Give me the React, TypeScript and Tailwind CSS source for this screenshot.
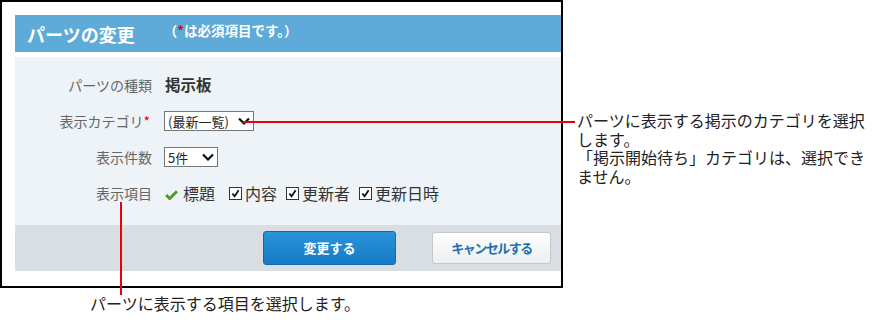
import React from 'react'

const FONT = "font-['Noto_Sans_CJK_JP','Noto_Sans',sans-serif]"
// 注釈用（行ボックスを詰めるため欧文フォントを先頭に）
const NOTE_FONT = "font-['Liberation_Sans','Noto_Sans_CJK_JP',sans-serif]"

// セレクトボックス風の表示
function FakeSelect({ value, width }: { value: string; width: string }) {
  return (
    <div
      className={`${width} h-[20px] flex items-center justify-between border border-[#767676] bg-white pl-[3px] pr-[3px] text-[13px] text-[#222] leading-none`}
    >
      <span>{value}</span>
      <svg className="w-[12px] h-[8px]" viewBox="0 0 12 8" fill="none">
        <path d="M1 1.5l5 5 5-5" stroke="#111" strokeWidth="2.2" />
      </svg>
    </div>
  )
}

function CheckBox() {
  return (
    <span className="inline-flex w-[13px] h-[13px] items-center justify-center border border-[#333] bg-white">
      <svg className="w-[9px] h-[9px]" viewBox="0 0 10 10" fill="none">
        <path d="M1.5 5l2.5 3L8.5 1.5" stroke="#111" strokeWidth="2" />
      </svg>
    </span>
  )
}

const ITEMS = ['内容', '更新者', '更新日時']

const NOTE_LINES = [
  'パーツに表示する掲示のカテゴリを選択',
  'します。',
  '「掲示開始待ち」カテゴリは、選択でき',
  'ません。',
]

export default function App() {
  return (
    <div className={`relative w-[874px] h-[326px] bg-white ${FONT}`}>
      {/* 画面のスクリーンショット枠 */}
      <div className="w-[563px] h-[288px] border-2 border-black pl-[13px] pt-[13px]">
        {/* ヘッダー */}
        <div className="h-[37px] bg-[#5eaad9] flex items-center pl-[12px]">
          <span className="text-[18px] font-bold text-white leading-none">パーツの変更</span>
          <span className="ml-[29px] -mt-[6px] text-[13.5px] font-bold text-white leading-none">
            （<span className="text-[#e60012]">*</span>は必須項目です。）
          </span>
        </div>

        {/* 本体 */}
        <div className="mt-[5px] bg-[#eef3f7] pt-[10px] pb-[14px]">
          <div className="h-[36px] flex items-center">
            <div className="w-[137px] text-right text-[14px] text-[#666]">パーツの種類</div>
            <div className="ml-[13px] text-[15.5px] font-bold text-[#333]">掲示板</div>
          </div>
          <div className="h-[36px] flex items-center">
            <div className="w-[137px] pr-[2px] text-right text-[14px] text-[#666]">
              表示カテゴリ<span className="text-[#e60012]">*</span>
            </div>
            <div className="ml-[12px]">
              <FakeSelect value="(最新一覧)" width="w-[90px]" />
            </div>
          </div>
          <div className="h-[36px] flex items-center">
            <div className="w-[137px] text-right text-[14px] text-[#666]">表示件数</div>
            <div className="ml-[12px]">
              <FakeSelect value="5件" width="w-[54px]" />
            </div>
          </div>
          <div className="h-[36px] flex items-center">
            <div className="w-[137px] text-right text-[14px] text-[#666]">表示項目</div>
            <div className="ml-[13px] flex items-center text-[16px] text-[#333]">
              <svg className="w-[13px] h-[10px] mt-[3px]" viewBox="0 0 13 10" fill="none">
                <path d="M1.2 5l3.5 3.5L12 1.2" stroke="#4c9a2a" strokeWidth="3" />
              </svg>
              <span className="ml-[5px]">標題</span>
              <div className="ml-[14px] flex items-center gap-[9px]">
                {ITEMS.map((item) => (
                  <span key={item} className="flex items-center gap-[3px]">
                    <CheckBox />
                    {item}
                  </span>
                ))}
              </div>
            </div>
          </div>
        </div>

        {/* フッター */}
        <div className="h-[46px] bg-[#d9dee2] flex items-center pl-[248px]">
          <button className="w-[133px] h-[34px] rounded-[3px] border border-[#1569a8] bg-gradient-to-b from-[#2b93d8] to-[#157bc6] text-white text-[13px] font-bold">
            変更する
          </button>
          <button className="ml-[36px] w-[119px] h-[32px] rounded-[3px] border border-[#c4c8cc] bg-gradient-to-b from-white to-[#eceeef] text-[#1b6fb5] text-[13px] font-bold tracking-[-1.5px]">
            キャンセルする
          </button>
        </div>
      </div>

      {/* 注釈の線 */}
      <div className="absolute left-[243px] top-[121px] w-[332px] h-[2px] bg-[#e60012]" />
      <div className="absolute left-[120px] top-[202px] w-[2px] h-[93px] bg-[#e60012]" />

      {/* 注釈テキスト */}
      <div className={`absolute left-[577px] top-[113px] text-[16px] text-[#222] whitespace-nowrap ${NOTE_FONT}`}>
        {NOTE_LINES.map((line) => (
          <div key={line} className="h-[18.5px] leading-[18.5px]">
            {line}
          </div>
        ))}
      </div>
      <div className={`absolute left-[90px] top-[296px] text-[16px] leading-[18.5px] text-[#222] whitespace-nowrap ${NOTE_FONT}`}>
        パーツに表示する項目を選択します。
      </div>
    </div>
  )
}
